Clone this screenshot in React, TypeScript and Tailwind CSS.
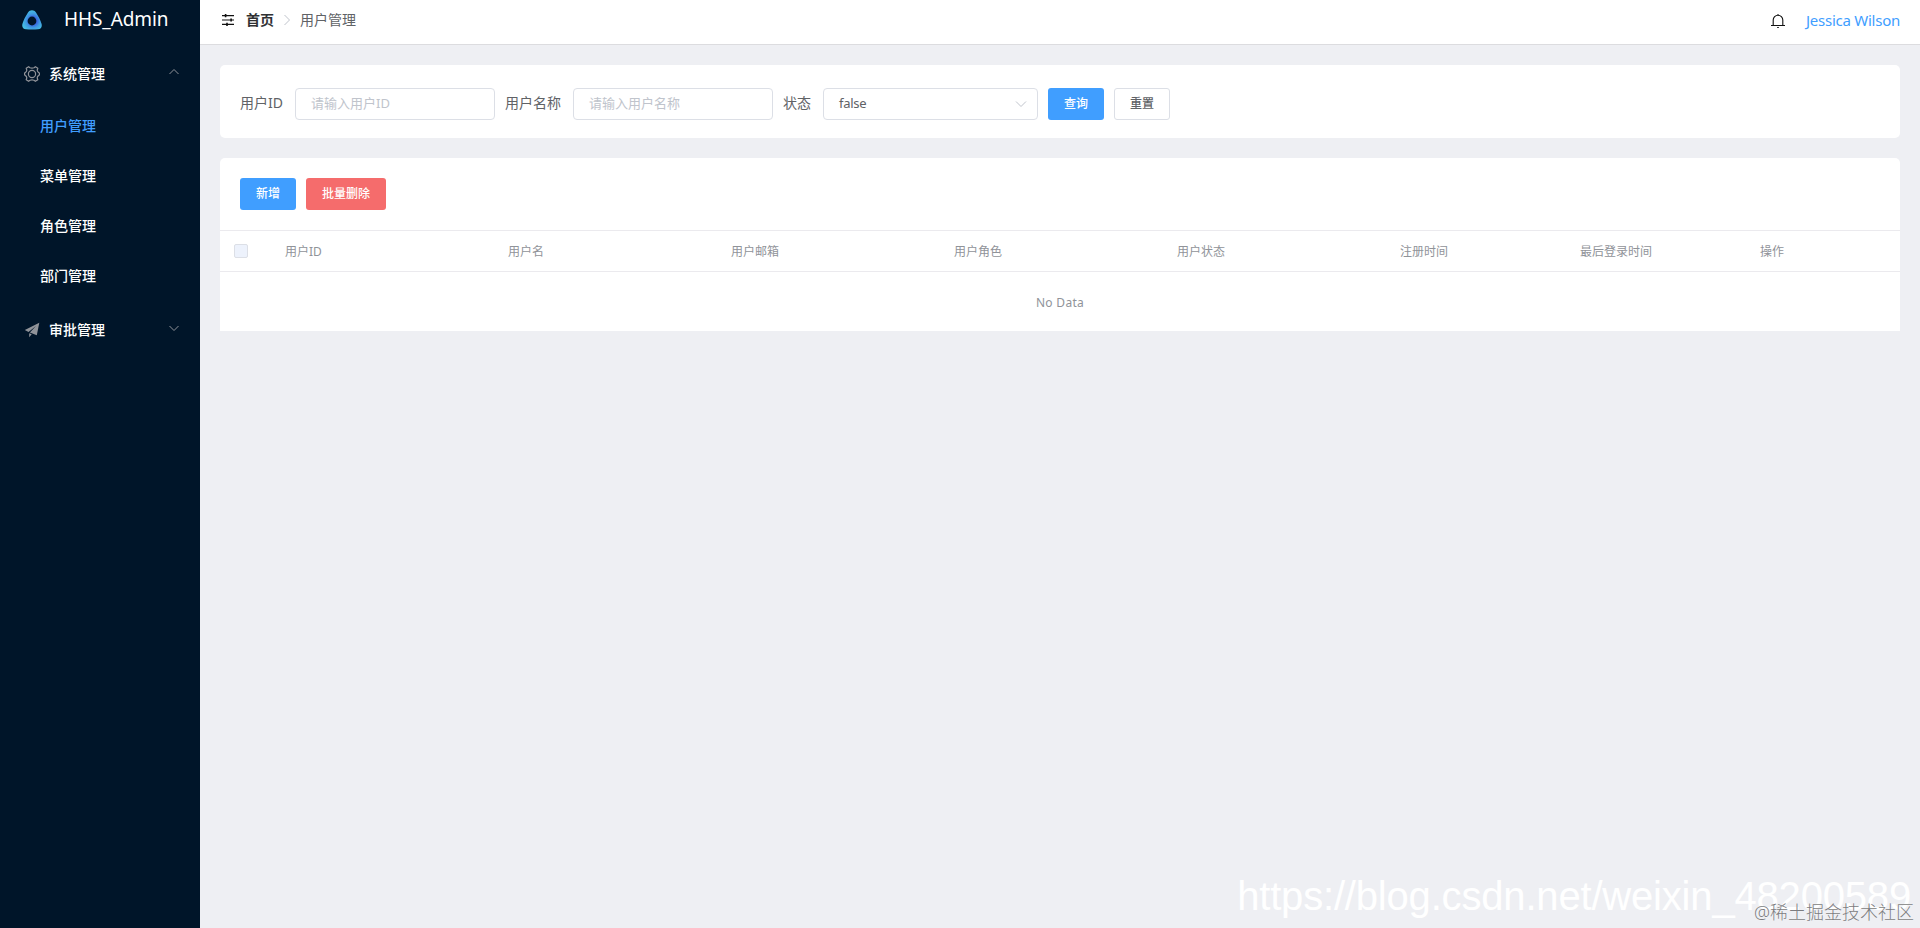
import React from 'react';

const SUB_MENUS = ['用户管理', '菜单管理', '角色管理', '部门管理'];

const COLUMNS = [
  { label: '用户ID', width: 'w-[223px]' },
  { label: '用户名', width: 'w-[223px]' },
  { label: '用户邮箱', width: 'w-[223px]' },
  { label: '用户角色', width: 'w-[223px]' },
  { label: '用户状态', width: 'w-[223px]' },
  { label: '注册时间', width: 'w-[180px]' },
  { label: '最后登录时间', width: 'w-[180px]' },
  { label: '操作', width: 'w-[150px]' },
];

const Chevron: React.FC<{ className?: string; d: string }> = ({ className, d }) => (
  <svg viewBox="0 0 12 12" className={className} fill="none" stroke="currentColor">
    <path d={d} />
  </svg>
);

const Logo = () => (
  <svg viewBox="0 0 20 20" className="h-5 w-5">
    <defs>
      <radialGradient id="logo" cx="0.55" cy="0.55" r="0.55">
        <stop offset="0.4" stopColor="#3a6ae0" />
        <stop offset="0.65" stopColor="#3f9ae2" />
        <stop offset="1" stopColor="#45bce4" />
      </radialGradient>
    </defs>
    <path
      fill="url(#logo)"
      fillRule="evenodd"
      d="M10 0.3C11.6 0.3 13 1 14 2.6C16.5 6.5 18.6 10.5 19.6 14C20.3 17 18.8 19 16 19.2C12 19.6 8 19.6 4 19.2C1.2 19 -0.3 17 0.4 14C1.4 10.5 3.5 6.5 6 2.6C7 1 8.4 0.3 10 0.3ZM10 6.6A4.4 4.4 0 1 0 10 15.4A4.4 4.4 0 1 0 10 6.6Z"
    />
  </svg>
);

const SettingIcon = () => (
  <svg viewBox="0 0 16 16" className="h-4 w-4" fill="none" stroke="#909399" strokeWidth="1.2">
    <path
      d="M4.600 0.700L6 1.800Q8 2.500 10 1.800L11.400 0.700L13.800 2.300L13.200 4.200Q13.400 5.800 14.500 6.400L15.400 7V9L14.500 9.600Q13.400 10.200 13.200 11.800L13.800 13.700L11.400 15.300L10 14.200Q8 13.500 6 14.200L4.600 15.300L2.200 13.700L2.800 11.800Q2.600 10.200 1.500 9.600L0.600 9V7L1.500 6.400Q2.600 5.800 2.800 4.200L2.200 2.300Z"
      strokeLinejoin="round"
    />
    <circle cx="8" cy="8" r="3.6" />
  </svg>
);

const PromotionIcon = () => (
  <svg viewBox="0 0 16 16" className="h-4 w-4" fill="#909399">
    <path d="M15.300 0.800L0.800 8l3.700 1.900L12 4 5.900 10.500l6.900 2.700zM5.200 11.300v3.900l2.500-2.900z" />
  </svg>
);

const OperationIcon = () => (
  <svg viewBox="0 0 14 14" className="h-3.5 w-3.5" fill="#111">
    <path d="M1 2h12v1.200H1zM1 6.400h12v1.200H1zM1 10.800h12v1.200H1z" />
    <path d="M3.800 1h1.600v3.200H3.800zM9.300 5.400h1.600v3.200H9.300zM5.200 9.800h1.600V13H5.200z" />
  </svg>
);

const BellIcon = () => (
  <svg viewBox="0 0 16 16" className="h-4 w-4" fill="none" stroke="#111" strokeWidth="1.1">
    <path d="M1 12.500h14M3.200 12.500V7a4.800 4.800 0 0 1 9.600 0v5.500M8 2.200V1M7.200 14.500h1.600" />
  </svg>
);

const Sidebar = () => (
  <aside className="flex w-[200px] shrink-0 flex-col bg-[#001529] text-sm text-white">
    <div className="flex h-10 items-center pl-[22px]">
      <Logo />
      <span className="ml-[22px] text-[19px] tracking-[-0.1px]">HHS_Admin</span>
    </div>
    <div className="mt-[9px] flex h-[50px] items-center pl-6 font-medium">
      <SettingIcon />
      <span className="ml-[9px]">系统管理</span>
      <Chevron className="mr-5 mb-1 ml-auto h-3 w-3 text-[#909399]" d="M1.500 8L6 3.500L10.500 8" />
    </div>
    <div className="pt-0.5">
      {SUB_MENUS.map((name, i) => (
        <div
          key={name}
          className={`flex h-[50px] items-center pl-10 font-medium ${i === 0 ? 'text-[#409eff]' : ''}`}
        >
          {name}
        </div>
      ))}
    </div>
    <div className="mt-1 flex h-[50px] items-center pl-6 font-medium">
      <PromotionIcon />
      <span className="ml-[9px]">审批管理</span>
      <Chevron className="mr-5 mb-1 ml-auto h-3 w-3 text-[#909399]" d="M1.500 4L6 8.500L10.500 4" />
    </div>
  </aside>
);

const Header = () => (
  <header className="flex h-[45px] items-center border-b border-[#dcdcdf] bg-white pr-5 pb-1 pl-[21px] text-sm">
    <OperationIcon />
    <span className="ml-[11px] font-bold text-[#303133]">首页</span>
    <Chevron className="mx-[7px] h-3 w-3 text-[#c0c4cc]" d="M3.500 1L8.500 6L3.500 11" />
    <span className="text-[#606266]">用户管理</span>
    <div className="ml-auto flex items-center pt-0.5">
      <BellIcon />
      <span className="ml-5 text-[15px] tracking-[-0.25px] text-[#409eff]">Jessica Wilson</span>
    </div>
  </header>
);

const SearchForm = () => (
  <section className="flex h-[73px] items-start rounded-[5px] bg-white px-5 pt-[23px] text-sm leading-[30px] text-[#606266]">
    <label className="w-[55px]">用户ID</label>
    <div className="h-8 w-[200px] rounded border border-[#dcdfe6] px-[15px] text-[13px] leading-7 text-[#c0c4cc]">请输入用户ID</div>
    <label className="ml-2.5 w-[68px]">用户名称</label>
    <div className="h-8 w-[200px] rounded border border-[#dcdfe6] px-[15px] text-[13px] leading-7 text-[#c0c4cc]">请输入用户名称</div>
    <label className="ml-2.5 w-10">状态</label>
    <div className="flex h-8 w-[215px] items-center justify-between rounded border border-[#dcdfe6] pr-[10px] pl-[15px] text-[13px]">
      <span className="pb-0.5 tracking-[-0.3px]">false</span>
      <Chevron className="h-3 w-3 text-[#c0c4cc]" d="M1 3.500L6 8.500L11 3.500" />
    </div>
    <button className="ml-2.5 h-8 w-14 rounded-[3px] bg-[#409eff] text-xs font-medium text-white">查询</button>
    <button className="ml-2.5 h-8 w-14 rounded-[3px] border border-[#dcdfe6] text-xs font-medium">重置</button>
  </section>
);

const UserTable = () => (
  <section className="mt-5 rounded-t-[5px] bg-white">
    <div className="flex h-[72px] gap-2.5 px-5 pt-5 text-xs font-medium text-white">
      <button className="h-8 w-14 rounded-[3px] bg-[#409eff]">新增</button>
      <button className="h-8 w-20 rounded-[3px] bg-[#f56c6c]">批量删除</button>
    </div>
    <div className="flex h-[42px] items-center border-y border-[#ebeaee] text-xs text-[#909399]">
      <div className="w-[55px] pl-3.5">
        <div className="h-3.5 w-3.5 rounded-[2px] border border-[#dcdfe6] bg-[#edf2fc]" />
      </div>
      {COLUMNS.map((col) => (
        <div key={col.label} className={`${col.width} px-2.5 pt-0.5`}>
          {col.label}
        </div>
      ))}
    </div>
    <div className="flex h-[59px] items-center justify-center pt-0.5 text-xs tracking-[0.3px] text-[#909399]">No Data</div>
  </section>
);

const App: React.FC = () => {
  return (
    <div className="relative flex h-[928px] w-[1920px] overflow-hidden bg-[#eeeff3] font-['Noto_Sans','Noto_Sans_CJK_SC',sans-serif]">
      <Sidebar />
      <main className="flex-1">
        <Header />
        <div className="p-5">
          <SearchForm />
          <UserTable />
        </div>
      </main>
      <div className="absolute right-[9px] bottom-[8px] font-['Liberation_Sans',sans-serif] text-[40px] leading-[48px] tracking-[-0.18px] whitespace-nowrap text-white">
        https://blog.csdn.net/weixin_48200589
      </div>
      <div className="absolute right-[6px] bottom-[4px] text-[18px] leading-6 font-light whitespace-nowrap text-[#7c7c80] [text-shadow:0_0_1px_#fff]">
        @稀土掘金技术社区
      </div>
    </div>
  );
};

export default App;
